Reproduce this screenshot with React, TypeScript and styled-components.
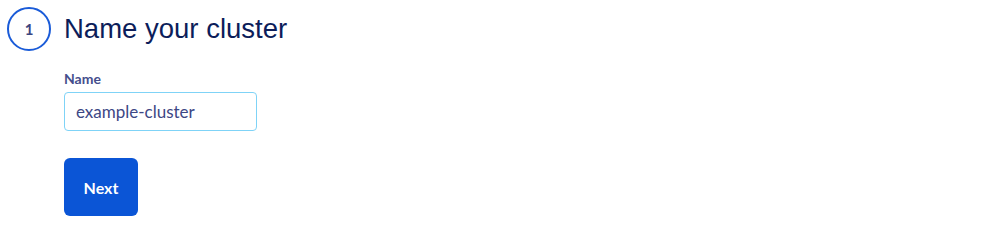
import React, { useState } from "react";
import styled, { createGlobalStyle } from "styled-components";

const GlobalStyle = createGlobalStyle`
  html, body {
    margin: 0;
    padding: 0;
    background: #ffffff;
  }
  body {
    font-family: "Liberation Sans", Arial, sans-serif;
  }
`;

const Page = styled.div`
  padding: 7px 0 0 7px;
`;

const StepHeader = styled.div`
  display: flex;
  align-items: center;
  gap: 13px;
`;

const StepBadge = styled.div`
  box-sizing: border-box;
  width: 44px;
  height: 44px;
  border-radius: 50%;
  border: 2px solid #1a5bd8;
  display: flex;
  align-items: center;
  justify-content: center;
  font-family: "Lato", sans-serif;
  font-weight: 700;
  font-size: 15px;
  color: #3b4580;
`;

const Title = styled.h2`
  margin: 0;
  font-family: "Liberation Sans", Arial, sans-serif;
  font-weight: 400;
  font-size: 27.5px;
  color: #0c1d5a;
`;

const StepBody = styled.div`
  padding: 19px 0 0 57px;
  display: flex;
  flex-direction: column;
  align-items: flex-start;
`;

const Label = styled.label`
  font-family: "Lato", sans-serif;
  font-weight: 700;
  font-size: 14px;
  color: #454e8c;
  margin-bottom: 5px;
`;

const Input = styled.input`
  box-sizing: border-box;
  width: 193px;
  height: 39px;
  padding: 0 11px;
  border: 1px solid #7fd3f7;
  border-radius: 4px;
  font-family: "Lato", sans-serif;
  font-size: 17px;
  color: #3d4785;
  outline: none;
`;

const Button = styled.button`
  margin-top: 27px;
  width: 74px;
  height: 58px;
  border: none;
  border-radius: 6px;
  background: #0b55d6;
  color: #ffffff;
  font-family: "Lato", sans-serif;
  font-weight: 700;
  font-size: 16px;
  cursor: pointer;
`;

export default function App() {
  const [name, setName] = useState("example-cluster");
  return (
    <>
      <GlobalStyle />
      <Page>
        <StepHeader>
          <StepBadge>1</StepBadge>
          <Title>Name your cluster</Title>
        </StepHeader>
        <StepBody>
          <Label htmlFor="cluster-name">Name</Label>
          <Input
            id="cluster-name"
            value={name}
            onChange={(e) => setName(e.target.value)}
          />
          <Button>Next</Button>
        </StepBody>
      </Page>
    </>
  );
}
